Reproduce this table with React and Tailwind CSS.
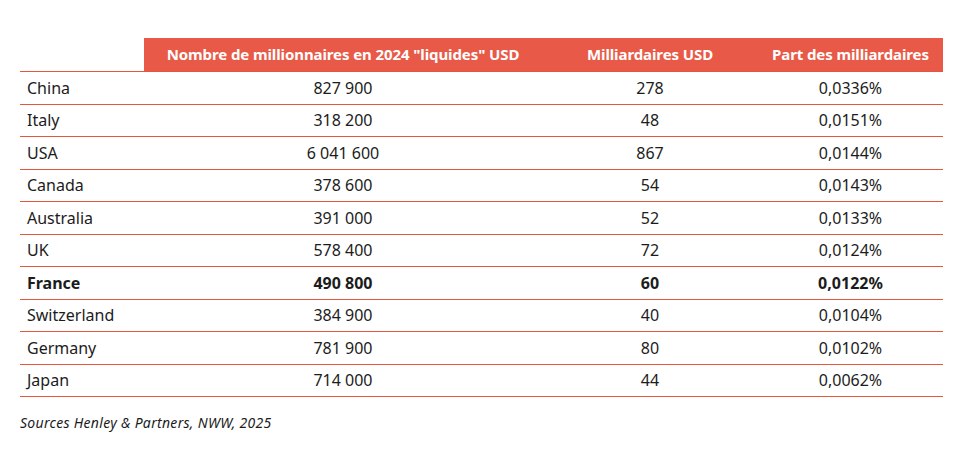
import React from "react";

const rows = [
  ["China", "827 900", "278", "0,0336%"],
  ["Italy", "318 200", "48", "0,0151%"],
  ["USA", "6 041 600", "867", "0,0144%"],
  ["Canada", "378 600", "54", "0,0143%"],
  ["Australia", "391 000", "52", "0,0133%"],
  ["UK", "578 400", "72", "0,0124%"],
  ["France", "490 800", "60", "0,0122%", true],
  ["Switzerland", "384 900", "40", "0,0104%"],
  ["Germany", "781 900", "80", "0,0102%"],
  ["Japan", "714 000", "44", "0,0062%"],
];

export default function App() {
  return (
    <div
      className="w-[963px] h-[450px] bg-white text-[#1c1c1c] pt-[38px] pl-[20px]"
      style={{ fontFamily: '"Noto Sans", sans-serif' }}
    >
      <div className="w-[923px]">
        <div className="grid grid-cols-[124px_398px_216px_185px] h-[33px]">
          <div></div>
          <div className="col-span-3 bg-[#e85a47] grid grid-cols-[398px_216px_185px] items-center text-white font-bold text-[15px] tracking-[-0.1px]">
            <div className="text-center">Nombre de millionnaires en 2024 "liquides" USD</div>
            <div className="text-center">Milliardaires USD</div>
            <div className="text-center">Part des milliardaires</div>
          </div>
        </div>
        <div className="border-t-[1.5px] border-[#e8553f]">
          {rows.map(([c, a, b, p, bold]) => (
            <div
              key={c}
              className={`grid grid-cols-[124px_398px_216px_185px] h-[32.5px] items-center border-b-[1.5px] border-[#e8553f] text-[16px] ${bold ? "font-bold" : ""}`}
            >
              <div className="pl-[7px]">{c}</div>
              <div className="text-center">{a}</div>
              <div className="text-center">{b}</div>
              <div className="text-center">{p}</div>
            </div>
          ))}
        </div>
        <div className="mt-[16px] italic text-[14px] leading-[20px] tracking-[0.3px]">
          Sources Henley &amp; Partners, NWW, 2025
        </div>
      </div>
    </div>
  );
}
